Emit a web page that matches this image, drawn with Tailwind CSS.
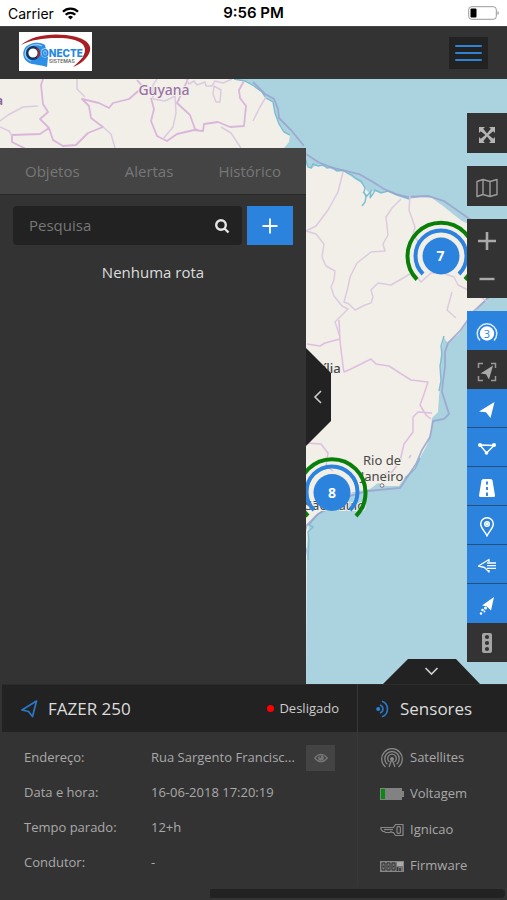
<!DOCTYPE html>
<html lang="pt-BR">
<head>
  <meta charset="UTF-8">
  <meta name="viewport" content="width=device-width, initial-scale=1.0">
  <title>Conecte Sistemas - Mapa</title>
  <script src="https://cdn.jsdelivr.net/npm/@tailwindcss/browser@4"></script>
</head>
<body class="min-h-screen flex flex-col bg-[#333] text-[#a9a9a9] font-['Open_Sans',sans-serif] text-[13px]">

  <!-- Status bar -->
  <div class="h-[26px] shrink-0 grid grid-cols-3 items-center bg-white text-black px-2 font-['Inter',sans-serif] text-[14px]">
    <div class="flex items-center gap-2">
      <span>Carrier</span>
      <svg class="w-[17px] h-[13px]" viewBox="0 0 17 13" fill="none" stroke="#000" stroke-width="2.3">
        <path d="M1 4.8a10.6 10.6 0 0 1 15 0M3.7 7.8a6.8 6.8 0 0 1 9.6 0"/>
        <path d="M8.500 12.500L6 10a3.500 3.500 0 0 1 5 0z" fill="#000" stroke="none"/>
      </svg>
    </div>
    <div class="text-center text-[15px] font-semibold">9:56 PM</div>
    <div class="flex justify-end">
      <svg class="w-8 h-4" viewBox="0 0 32 16">
        <rect x="1.700" y="1.700" width="27.600" height="12.600" rx="3" fill="#fff" stroke="#999"/>
        <rect x="3.500" y="3.500" width="6" height="9" rx="1" fill="#000"/>
        <path d="M30.500 6v4q1.300-.5 1.300-2t-1.300-2z" fill="#999"/>
      </svg>
    </div>
  </div>

  <!-- Header -->
  <header class="h-[53px] shrink-0 flex items-center justify-between bg-[#333] border-t border-[#444] px-[19px]">
    <a href="#" aria-label="Conecte Sistemas" class="block mb-1 bg-white">
      <svg class="w-[73px] h-[39px]" viewBox="0 0 73 39">
        <path d="M2 13C12 4 30 1 47 3c17 2 26 8 24 16-2 7-9 13-17 16 6-5 12-11 12-17C66 9 53 6 38 6 23 6 12 8 2 13z" fill="#a81e22"/>
        <path d="M26 13C20 9 10 11 6 16c-4 6-1 14 7 16 5 1 9 1 15 3l1-10z" fill="#2d8fe6"/>
        <path d="M23 14c-6-3-13-1-16 4-2 5 0 9 5 11" fill="none" stroke="#9ccdf4" stroke-width="1.200"/>
        <circle cx="14" cy="21" r="5.800" fill="#fff" stroke="#17335f" stroke-width="2.400"/>
        <path d="M18 16.500a6 6 0 0 1 0 9" fill="none" stroke="#b22" stroke-width="1.600"/>
        <text x="22" y="24.500" font-family="Inter, sans-serif" font-size="10" font-weight="800" fill="#2588e2" stroke="#fff" stroke-width=".8" paint-order="stroke">ONECTE</text>
        <text x="30" y="30.500" font-family="Inter, sans-serif" font-size="5" font-weight="600" fill="#666">SISTEMAS</text>
      </svg>
    </a>
    <button type="button" aria-label="Menu" class="w-[39px] h-8 flex flex-col items-center justify-center gap-[5px] bg-[#222]">
      <span class="w-[27px] h-[2px] rounded bg-[#2f82d6]"></span>
      <span class="w-[27px] h-[2px] rounded bg-[#2f82d6]"></span>
      <span class="w-[27px] h-[2px] rounded bg-[#2f82d6]"></span>
    </button>
  </header>

  <!-- Map -->
  <main class="relative grow flex justify-between min-h-[605px] bg-[#aad3df] overflow-hidden">
    <svg class="absolute inset-0 w-full h-full" viewBox="0 79 507 605" preserveAspectRatio="xMinYMin slice">
      <path fill="#f2efe9" d="M0 79H234L245 81 254 86 262 92 266 98 273 102 275 113 279 124 284 132 290 135 289 142 284 148 294 152 305 162 311 169 316 165 326 167 336 171 345 172 355 179 361 183 368 192 374 191 381 193 388 191 397 195 409 199 420 197 432 198 443 206 453 214 462 221 475 227 490 233 507 250V278L493 290 482 303 467 322 459 334 448 343 444 338 441 351 440 366 441 381 439 396 438 412 432 418 431 432 427 445 420 458 415 470 405 477 399 486 386 486 378 483 370 489 353 492 343 500 329 506 317 516 309 524 307 545 306 684H0z"/>
      <g fill="none" stroke="#7dbdd2" stroke-width="1.400">
        <path d="M234 79l11 2 9 5 8 6 4 6 7 4 2 11 4 11 5 8 6 3"/>
        <path d="M305 158l3 9 3 1 2-4 5 2 5-1 4 3 5-1 5 4 6-1 4 3 5 2 3 3 6 3 4 7-1 4 2 5-1 5-3 4M363 192l4 4 4-5-1 7 3-4 2-4 6 3 7-2 9 4 12 4"/>
        <path d="M444 336l-3 10 1 9-2 11 1 15-2 10M420 458l-5 11-10 9M343 500l-15 7-12 9-7 9 4 2-5 5 1 9-1 19"/>
      </g>
      <!-- maritime boundary -->
      <g fill="none" stroke="#9a9fcd" stroke-width="1.800" stroke-opacity=".8">
        <path d="M253 82l12 12 9 5 4 10 1 9 12 12 13 16"/>
        <path d="M306 154l12 8 15 6 26 6 14 8 11 7 12 5 12 3 20-1 16 5 17 12 13 9"/>
        <path d="M503 286l-15 12-14 13-14 20-12 12-3 9v15l-2 14-1 11 7 22-5 5-11 2-3 16-8 13-6 14-10 15-6 9-32 3-18 5-15 9-17 9-11 11-4 13 3 12-2 13-5 13"/>
      </g>
      <!-- country borders -->
      <g fill="none" stroke="#d9b6da" stroke-width="1.800" stroke-linejoin="round">
        <path d="M43 79l-2 6 2 19 5 8-8 7 9 9-9 6-28 1v7l14 7M49 128l4 12 10 6 13-1 12-12 15-6-12-9-2-12-7-7 17 4 10 5 4-5 16-4 14-12-6-7"/>
        <path d="M151 98l3 11-3 12 6 15 10 5 10-7 17-4 9 1 1-7 14-2 12 5 14-1 2-20-6-8-1-8 5-9M188 79l-4 9-5 11-2 4 13 12 5 14 6 2"/>
      </g>
      <!-- state borders -->
      <g fill="none" stroke="#dccbe0" stroke-width="1.500" stroke-linejoin="round">
        <path d="M77 79v10l8 8M0 121l8-6 15-8 15-1M0 127l9 4 3 5M103 127l8 7 4 14M157 79l-4 6v14M153 99l12 2 10-5 1 17-3 14-10 12M186 79l3 5 5-3 3 4 8-3 1 4h6l3-5 8 2 9-4M214 86l-1 8 3 8h4l1-12zM221 127l10 6 10 15"/>
        <path d="M266 97l-6 10-7 14M343 172l-5 20-10 18-12 16-10 5 10 3 8 10-2 13 4 9 9 5-1 9-3 7 3 9 8 10 6 3-13 13 5 15M410 196l-1 14 6 17-2 8 7 9M401 199l-9 9-6 9 2 18-5 9 2 7-14 1-14 11-7 14-2 10-4 15 5 2 6 6 10-5 6-2 2-6-2-7 7-7 13 2 14-8 8-5 8 10 10-9 9-1 14 5 4 8 18 9 12 8M452 292l-5 18 9 8"/>
        <path stroke="#dfbedf" d="M339 320l1 21 3 25 1 6 9-4 18-9 5 5 13 2 14 9 8 5 17 2-5 15-3 8 6 10 5 4M307 344l13 2 5-3 15-4M432 413l-14-1-5 5v15l-9 12-4 17-8 11-12 3M411 455l-2 3M306 443l15 1 7 9-2 13 7 5M326 372l7-4M307 420l5-1"/>
      </g>
      <g font-family="'Noto Sans', sans-serif" stroke="#f2efe9" stroke-width="2" paint-order="stroke">
        <text x="164" y="95" text-anchor="middle" font-size="14" fill="#9a71a5" font-weight="500">Guyana</text>
        <text x="3" y="105" text-anchor="end" font-size="13" fill="#8d6399" font-weight="600">Venezuela</text>
        <g font-size="13" fill="#484848" text-anchor="middle">
          <text x="318" y="373" font-weight="500">Brasília</text>
          <text x="382" y="465">Rio de</text>
          <text x="382" y="481">Janeiro</text>
          <text x="335" y="510">São Paulo</text>
        </g>
      </g>
      <circle cx="382" cy="485.500" r="1.800" fill="#fff" stroke="#777"/>
      <!-- clusters -->
      <g fill="none" stroke-linecap="butt">
        <path d="M423 274a25.500 25.500 0 1 1 36 0" stroke="#2b83de" stroke-width="4"/>
        <path d="M417 279.500a33.500 33.500 0 1 1 48 0" stroke="#088008" stroke-width="4"/>
        <path d="M314 510a25.500 25.500 0 1 1 36 0" stroke="#2b83de" stroke-width="4"/>
        <path d="M308 516a33.500 33.500 0 1 1 48 0" stroke="#088008" stroke-width="4"/>
      </g>
      <circle cx="441" cy="256" r="18.500" fill="#2b83de"/>
      <circle cx="332" cy="492.500" r="18.500" fill="#2b83de"/>
      <g font-family="'Open Sans', sans-serif" font-size="14" font-weight="700" fill="#fff" text-anchor="middle">
        <text x="440.500" y="261">7</text>
        <text x="332" y="497.500">8</text>
      </g>
    </svg>

    <!-- Side panel -->
    <div class="relative mt-[69px] flex items-stretch">
      <aside class="w-[306px] bg-[#333]">
        <nav class="h-[47px] flex items-center justify-between bg-[#444] border-b border-[#292929] px-[25px] text-[15px] text-[#777]">
          <a href="#">Objetos</a>
          <a href="#">Alertas</a>
          <a href="#">Histórico</a>
        </nav>
        <form class="flex gap-[5px] px-[13px] pt-[11px]">
          <div class="grow h-[39px] flex items-center rounded-sm bg-[#222] px-3">
            <input type="search" aria-label="Pesquisa" placeholder="Pesquisa" class="w-full min-w-0 px-1 bg-transparent text-[15px] text-[#ddd] placeholder:text-[#777] outline-none">
            <button type="submit" aria-label="Buscar" class="shrink-0">
              <svg class="w-4 h-4" viewBox="0 0 16 16" fill="none" stroke="#e6e6e6" stroke-width="2.400">
                <circle cx="7" cy="7" r="4.800"/>
                <path d="M10.500 10.500l4 4"/>
              </svg>
            </button>
          </div>
          <button type="button" aria-label="Adicionar" class="w-[46px] shrink-0 h-[39px] flex items-center justify-center bg-[#2b83de]">
            <svg class="w-4 h-4" viewBox="0 0 16 16" stroke="#fff" stroke-width="1.800"><path d="M8 .5v15M.5 8h15"/></svg>
          </button>
        </form>
        <p class="mt-4 text-center text-[15px] text-[#ddd]">Nenhuma rota</p>
      </aside>
      <button type="button" aria-label="Recolher painel" class="self-start mt-[200px]">
        <svg class="w-[25px] h-[98px]" viewBox="0 0 25 98">
          <path d="M0 0l25 25v48L0 98z" fill="#222"/>
          <path d="M15 43l-6 6 6 6" fill="none" stroke="#ccc" stroke-width="1.600"/>
        </svg>
      </button>
    </div>

    <!-- Map controls -->
    <div class="relative w-10 shrink-0 mt-[34px] flex flex-col gap-[13px]">
      <button type="button" aria-label="Tela cheia" class="h-10 flex items-center justify-center bg-[#333]">
        <svg class="w-[18px] h-[18px] mt-1" viewBox="0 0 18 18" fill="#b5b5b5">
          <path d="M1 1h6L5.200 2.800 9 7.400l3.800-4.600L11 1h6v6l-1.800-1.800L10.600 9l4.600 3.800L17 11v6h-6l1.800-1.800L9 10.600l-3.800 4.600L7 17H1v-6l1.800 1.800L7.400 9 2.800 5.200 1 7z"/>
        </svg>
      </button>
      <button type="button" aria-label="Camadas" class="h-10 flex items-center justify-center bg-[#333]">
        <svg class="w-[22px] h-5 mt-1" viewBox="0 0 22 20" fill="none" stroke="#9c9c9c" stroke-width="1.400" stroke-linejoin="round">
          <path d="M1 3.500l6-2 7 2 7-2v15l-7 2-7-2-6 2zM7 1.500v15M14 3.500v15"/>
        </svg>
      </button>
      <div class="flex flex-col bg-[#333]">
        <button type="button" aria-label="Aproximar" class="h-10 flex items-center justify-center">
          <svg class="w-[18px] h-[18px] mt-1" viewBox="0 0 18 18" stroke="#aaa" stroke-width="2.600"><path d="M9 0v18M0 9h18"/></svg>
        </button>
        <button type="button" aria-label="Afastar" class="h-[39px] flex items-center justify-center">
          <svg class="w-[18px] h-[18px]" viewBox="0 0 18 18" stroke="#aaa" stroke-width="2.400"><path d="M1.500 9h15"/></svg>
        </button>
      </div>
      <div class="flex flex-col">
        <button type="button" aria-label="Agrupar objetos" class="h-[39px] flex items-center justify-center bg-[#2b83de]">
          <svg class="w-6 h-6 mt-1" viewBox="0 0 24 24">
            <path d="M5 19.500a9.800 9.800 0 1 1 14 0" fill="none" stroke="#d8ebff" stroke-width="1.500"/>
            <circle cx="12" cy="12.500" r="7.200" fill="#fff"/>
            <text x="12" y="16.500" text-anchor="middle" font-family="'Open Sans', sans-serif" font-size="11" fill="#2b83de">3</text>
          </svg>
        </button>
        <button type="button" aria-label="Seguir objeto" class="h-[39px] flex items-center justify-center bg-[#333]">
          <svg class="w-5 h-5 mt-1" viewBox="0 0 20 20">
            <path d="M1.500 6V1.500H6M14 1.500h4.500V6M18.500 14v4.500H14M6 18.500H1.500V14" fill="none" stroke="#999" stroke-width="1.500"/>
            <path d="M16 3.500L3.500 11.500l5.500.8L12 17.500z" fill="#aaa"/>
          </svg>
        </button>
        <button type="button" aria-label="Objetos" class="h-[39px] flex items-center justify-center bg-[#2b83de] border-b border-[#254f7c]">
          <svg class="w-[18px] h-[18px] mt-1" viewBox="0 0 18 18"><path d="M16.500 1L1 10.500l7 .8L12.500 17z" fill="#fff"/></svg>
        </button>
        <button type="button" aria-label="Geocercas" class="h-[39px] flex items-center justify-center bg-[#2b83de] border-b border-[#254f7c]">
          <svg class="w-5 h-4 mt-1" viewBox="0 0 20 16">
            <path d="M3 4l14 .5L9.500 12z" fill="none" stroke="#fff" stroke-width="1.500"/>
            <g fill="#fff"><circle cx="3" cy="4" r="2"/><circle cx="17" cy="4" r="2"/><circle cx="9.500" cy="12" r="1.800"/></g>
          </svg>
        </button>
        <button type="button" aria-label="Rotas" class="h-[39px] flex items-center justify-center bg-[#2b83de] border-b border-[#254f7c]">
          <svg class="w-[18px] h-[18px] mt-1" viewBox="0 0 18 18">
            <path d="M3.500 1.500q.3-1.500 2-1.500h7q1.700 0 2 1.500l2.500 15q0 1.500-1.500 1.500h-13Q1 18 1 16.500z" fill="#fff"/>
            <path d="M9 2.500v3M9 8v3M9 13.500V17" stroke="#2b83de" stroke-width="1.900"/>
          </svg>
        </button>
        <button type="button" aria-label="Pontos de interesse" class="h-[39px] flex items-center justify-center bg-[#2b83de] border-b border-[#254f7c]">
          <svg class="w-4 h-5 mt-1" viewBox="0 0 16 20" fill="none" stroke="#fff" stroke-width="1.500">
            <path d="M8 18.800C6 14.500 1.700 11 1.700 7a6.300 6.300 0 0 1 12.600 0c0 4-4.300 7.500-6.300 11.800z"/>
            <circle cx="8" cy="7" r="2.300"/><circle cx="8" cy="7" r=".6"/>
          </svg>
        </button>
        <button type="button" aria-label="Nomes dos objetos" class="h-[39px] flex items-center justify-center bg-[#2b83de] border-b border-[#254f7c]">
          <svg class="w-5 h-4 mt-1" viewBox="0 0 20 16" fill="none" stroke="#fff" stroke-width="1.300" stroke-linejoin="round">
            <path d="M12 4V1.500L1.500 8l6 1.500L12 14v-2"/>
            <path d="M10 5h9M10 7.700h9M10 10.400h9"/>
          </svg>
        </button>
        <button type="button" aria-label="Rastro" class="h-[39px] flex items-center justify-center bg-[#2b83de]">
          <svg class="w-4 h-[18px] mt-1" viewBox="0 0 16 18" fill="#fff">
            <path d="M15 0L3 8.500l4.500.7L12 13.500z"/>
            <circle cx="6.500" cy="11" r="1.500"/><circle cx="3.500" cy="13" r="1.300"/><circle cx="5.500" cy="14.500" r=".9"/><circle cx="2" cy="16.500" r="1.200"/>
          </svg>
        </button>
        <button type="button" aria-label="Trânsito" class="h-[39px] flex items-center justify-center bg-[#333]">
          <svg class="w-[10px] h-5" viewBox="0 0 10 20">
            <rect width="10" height="20" rx="2" fill="#a5a5a5"/>
            <g fill="#333"><circle cx="5" cy="4" r="2.100"/><circle cx="5" cy="10" r="2.100"/><circle cx="5" cy="16" r="2.100"/></g>
          </svg>
        </button>
      </div>
    </div>

    <!-- Bottom panel toggle -->
    <button type="button" aria-label="Recolher detalhes" class="absolute bottom-0 right-[27px]">
      <svg class="w-[97px] h-[25px]" viewBox="0 0 97 25">
        <path d="M0 25L25 0h48l24 25z" fill="#222"/>
        <path d="M42.500 9l6 6 6-6" fill="none" stroke="#ccc" stroke-width="1.700"/>
      </svg>
    </button>
  </main>

  <!-- Object details -->
  <div class="shrink-0 flex pl-[2px]">
    <section class="grow">
      <div class="h-12 flex items-center bg-[#222] border-t border-[#2c2c2c] px-[18px]">
        <svg class="w-[18px] h-[18px]" viewBox="0 0 18 18" fill="none" stroke="#2b78c8" stroke-width="1.700" stroke-linejoin="round"><path d="M16.500 1L2 10l6.500 1.500L12.500 16.500z"/></svg>
        <h2 class="ml-[10px] text-[17px] text-[#ddd]">FAZER 250</h2>
        <span class="ml-auto flex items-center gap-[5px] text-[#ccc]"><i class="w-[7px] h-[7px] rounded-full bg-[#f00]"></i>Desligado</span>
      </div>
      <table class="mt-2 ml-[22px] text-left">
        <tr class="h-[35px]">
          <th scope="row" class="w-[127px] font-normal">Endereço:</th>
          <td>
            <div class="flex items-center gap-[6px]">
              <span class="w-[149px] whitespace-nowrap">Rua Sargento Francisc...</span>
              <button type="button" aria-label="Mostrar endereço" class="w-[29px] h-[26px] flex items-center justify-center bg-[#444]">
                <svg class="w-[14px] h-[10px]" viewBox="0 0 14 10">
                  <path d="M.7 5Q7-2.500 13.300 5 7 12.500.7 5z" fill="none" stroke="#777" stroke-width="1.200"/>
                  <circle cx="7" cy="5" r="2.800" fill="#777"/><circle cx="6.300" cy="4" r=".9" fill="#444"/>
                </svg>
              </button>
            </div>
          </td>
        </tr>
        <tr class="h-[35px]"><th scope="row" class="font-normal">Data e hora:</th><td>16-06-2018 17:20:19</td></tr>
        <tr class="h-[35px]"><th scope="row" class="font-normal">Tempo parado:</th><td>12+h</td></tr>
        <tr class="h-[35px]"><th scope="row" class="font-normal">Condutor:</th><td>-</td></tr>
      </table>
    </section>

    <section class="w-[150px] shrink-0 border-l border-[#383838]">
      <div class="h-12 flex items-center gap-[9px] bg-[#222] border-t border-[#2c2c2c] pl-[18px]">
        <svg class="w-[15px] h-[18px]" viewBox="0 0 15 18" fill="none" stroke="#2b78c8" stroke-width="1.600">
          <circle cx="2.200" cy="9" r="2" fill="#2b83de" stroke="none"/>
          <path d="M4 5a4.200 4.200 0 0 1 0 8M6 1.200a8.300 8.300 0 0 1 0 15.600"/>
        </svg>
        <h2 class="text-[17px] text-[#ddd]">Sensores</h2>
      </div>
      <ul class="mt-2 pl-[22px]">
        <li class="h-9 flex items-center gap-[6px]">
          <svg class="w-6 h-5" viewBox="0 0 24 20" fill="none" stroke="#888" stroke-width="1.300">
            <path d="M5.500 19a10.300 10.300 0 1 1 13 0M7.500 16.300a7.200 7.200 0 1 1 9 0M9.500 14a4.300 4.300 0 1 1 5 0"/>
            <circle cx="12" cy="11" r="1.300" fill="#888"/><path d="M12 11l-3 8M12 11l3 8"/>
          </svg>
          <span>Satellites</span>
        </li>
        <li class="h-9 flex items-center gap-[6px]">
          <svg class="w-6 h-3" viewBox="0 0 24 12"><path d="M0 0h22v3h2v6h-2v3H0z" fill="#828282"/><path d="M1 1h4v10H1z" fill="#088a12"/></svg>
          <span>Voltagem</span>
        </li>
        <li class="h-9 flex items-center gap-[6px]">
          <svg class="w-6 h-[14px]" viewBox="0 0 24 14" fill="none" stroke="#888" stroke-width="1.200">
            <path d="M1 4.500h12.500l2-3h7.500v11h-7.500l-2-3H12l-1-1-1 1H5.500L4.500 8.500H3L1 6.500z"/>
            <path d="M4 6.500h9"/>
            <rect x="17" y="3.700" width="3.400" height="6.600" rx="1"/>
          </svg>
          <span>Ignicao</span>
        </li>
        <li class="h-9 flex items-center gap-[6px]">
          <svg class="w-6 h-[11px]" viewBox="0 0 24 11">
            <rect x=".5" y=".5" width="23" height="10" fill="#777" stroke="#888"/>
            <path d="M2 2h3v7H2zM7 2h3v7H7zM12 2h3v7h-3z" fill="none" stroke="#333"/>
            <path d="M3 5.500h1M8 5.500h1M13 5.500h1M17.500 6v4M20 7v3" stroke="#333" stroke-width="1.500"/>
            <path d="M17 1h6v4h-6z" fill="#aaa"/>
          </svg>
          <span>Firmware</span>
        </li>
      </ul>
    </section>
  </div>
  <div class="shrink-0 h-4 flex items-center justify-end pt-[5px] pb-[2px] pr-[2px]">
    <div class="w-7/12 h-[9px] rounded-r bg-[#222]"></div>
  </div>
</body>
</html>
